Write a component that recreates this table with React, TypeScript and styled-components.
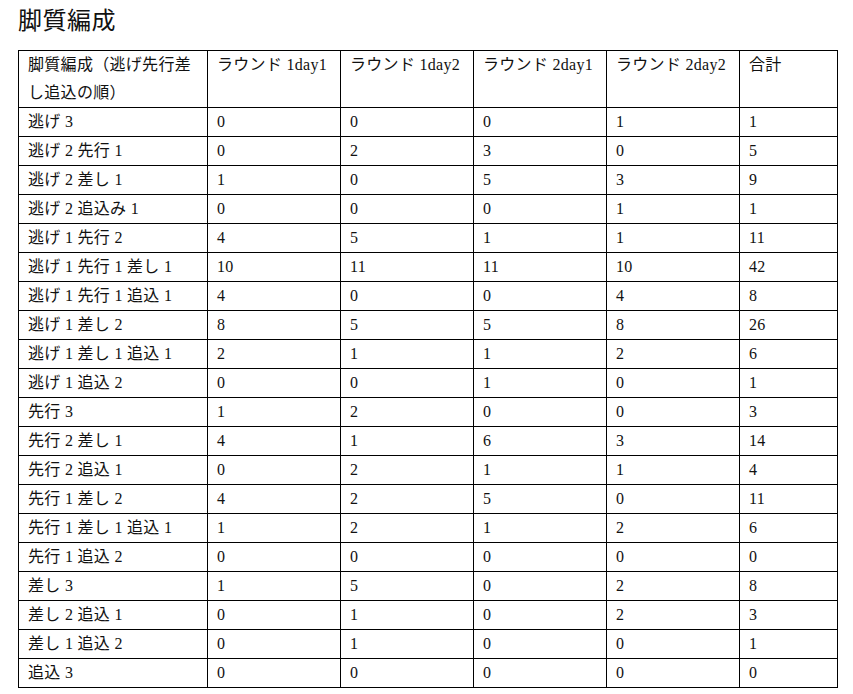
import styled, { createGlobalStyle } from 'styled-components'

const GlobalStyle = createGlobalStyle`
  html, body {
    margin: 0;
    padding: 0;
    background: #fff;
  }
  body {
    font-family: "Liberation Serif", "Noto Sans CJK JP", serif;
    color: #111;
  }
`

const Page = styled.div`
  padding: 6px 18px 0 18px;
`

const Title = styled.h2`
  margin: 0 0 13px 0;
  font-size: 24px;
  font-weight: 400;
  line-height: 31px;
  letter-spacing: 0.5px;
`

const Table = styled.table`
  border-collapse: collapse;
  table-layout: fixed;
  width: 820px;
  font-size: 16px;
  letter-spacing: 0.3px;
`

const Th = styled.th<{ $wrap?: boolean }>`
  border: 1px solid #000;
  padding: 0 9px;
  line-height: 28px;
  font-weight: 400;
  text-align: left;
  vertical-align: top;
  white-space: ${p => (p.$wrap ? 'normal' : 'nowrap')};
`

const Td = styled.td`
  border: 1px solid #000;
  padding: 0 9px;
  line-height: 28px;
  text-align: left;
  white-space: nowrap;
`

const widths = [189, 133, 133, 133, 133, 98]

const headers = [
  '脚質編成（逃げ先行差し追込の順）',
  'ラウンド 1day1',
  'ラウンド 1day2',
  'ラウンド 2day1',
  'ラウンド 2day2',
  '合計'
]

const rows: Array<[string, number, number, number, number, number]> = [
  ['逃げ 3', 0, 0, 0, 1, 1],
  ['逃げ 2 先行 1', 0, 2, 3, 0, 5],
  ['逃げ 2 差し 1', 1, 0, 5, 3, 9],
  ['逃げ 2 追込み 1', 0, 0, 0, 1, 1],
  ['逃げ 1 先行 2', 4, 5, 1, 1, 11],
  ['逃げ 1 先行 1 差し 1', 10, 11, 11, 10, 42],
  ['逃げ 1 先行 1 追込 1', 4, 0, 0, 4, 8],
  ['逃げ 1 差し 2', 8, 5, 5, 8, 26],
  ['逃げ 1 差し 1 追込 1', 2, 1, 1, 2, 6],
  ['逃げ 1 追込 2', 0, 0, 1, 0, 1],
  ['先行 3', 1, 2, 0, 0, 3],
  ['先行 2 差し 1', 4, 1, 6, 3, 14],
  ['先行 2 追込 1', 0, 2, 1, 1, 4],
  ['先行 1 差し 2', 4, 2, 5, 0, 11],
  ['先行 1 差し 1 追込 1', 1, 2, 1, 2, 6],
  ['先行 1 追込 2', 0, 0, 0, 0, 0],
  ['差し 3', 1, 5, 0, 2, 8],
  ['差し 2 追込 1', 0, 1, 0, 2, 3],
  ['差し 1 追込 2', 0, 1, 0, 0, 1],
  ['追込 3', 0, 0, 0, 0, 0]
]

export default function App () {
  return (
    <>
      <GlobalStyle />
      <Page>
        <Title>脚質編成</Title>
        <Table>
          <colgroup>
            {widths.map((w, i) => <col key={'c' + i} style={{ width: w }} />)}
          </colgroup>
          <thead>
            <tr>
              {headers.map((h, i) => <Th key={'h' + i} $wrap={i === 0}>{h}</Th>)}
            </tr>
          </thead>
          <tbody>
            {rows.map((r, i) => (
              <tr key={'r' + i}>
                {r.map((v, j) => <Td key={'d' + j}>{v}</Td>)}
              </tr>
            ))}
          </tbody>
        </Table>
      </Page>
    </>
  )
}
